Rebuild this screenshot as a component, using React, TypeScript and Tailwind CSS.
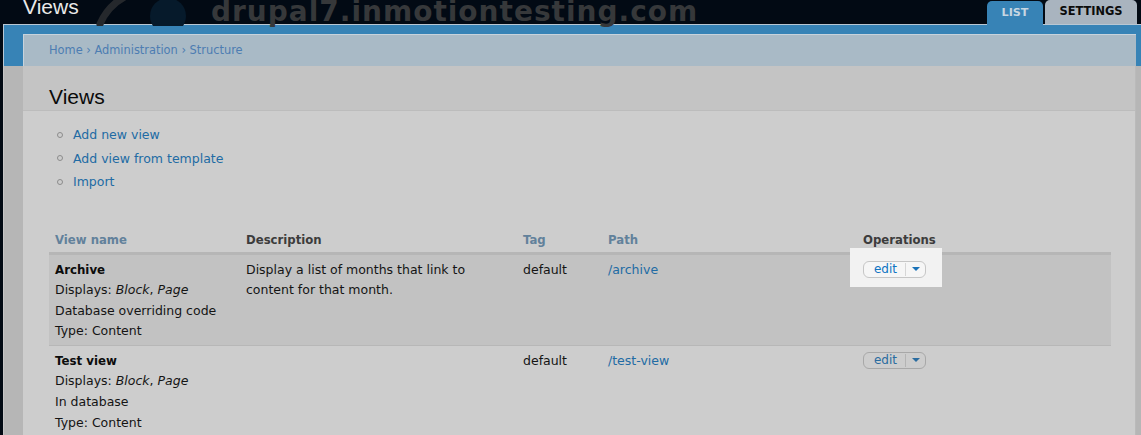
import React from 'react';

type Row = {
  name: string;
  storage: string;
  desc: string[];
  tag: string;
  path: string;
  lit?: boolean;
};

const rows: Row[] = [
  {
    name: 'Archive',
    storage: 'Database overriding code',
    desc: ['Display a list of months that link to', 'content for that month.'],
    tag: 'default',
    path: '/archive',
    lit: true,
  },
  {
    name: 'Test view',
    storage: 'In database',
    desc: [],
    tag: 'default',
    path: '/test-view',
  },
];

const cols = 'grid grid-cols-[191px_277px_85px_255px_254px]';

function EditButton({ lit }: { lit?: boolean }) {
  return (
    <div
      className={`relative z-10 flex h-[17px] w-[63px] items-center rounded-[6px] border ${
        lit ? 'border-[#c6c6c6] bg-[#f6f6f6]' : 'border-[#a8a8a8] bg-[#cdcdcd]'
      }`}
    >
      <span className={`flex-1 pl-[2px] text-center text-[12px] leading-none ${lit ? 'text-[#0f74c2]' : 'text-[#2a6ca0]'}`}>
        edit
      </span>
      <span className={`h-[13px] w-px ${lit ? 'bg-[#d6d6d6]' : 'bg-[#b4b4b4]'}`} />
      <span className="flex w-[19px] justify-center">
        <span className={`border-x-[4px] border-t-[4px] border-x-transparent ${lit ? 'border-t-[#1a72b8]' : 'border-t-[#2a6ca0]'}`} />
      </span>
    </div>
  );
}

export default function App() {
  return (
    <div className="relative h-[435px] w-[1141px] overflow-hidden bg-[#020a14] font-['DejaVu_Sans',Verdana,sans-serif]">
      {/* top bar */}
      <div className="relative flex h-[24px] items-start justify-between">
        <svg className="absolute left-[92px] top-[-14px]" width="100" height="40" viewBox="0 0 100 40">
          <path d="M8 38 C 14 24, 26 12, 44 6" stroke="#25282c" strokeWidth="7" fill="none" strokeLinecap="round" />
          <circle cx="76" cy="30" r="18" fill="#061a2b" />
        </svg>
        <div className="absolute left-[211px] top-[-3px] whitespace-nowrap text-[28px] font-bold leading-[30px] tracking-[1px] text-[#36383a]">
          drupal7.inmotiontesting.com
        </div>
        <div className="relative -mt-[3px] pl-[23px] font-['Liberation_Sans',Arial,sans-serif] text-[21px] leading-[20px] text-[#e9e9e9]">
          Views
        </div>
        <div className="relative z-10 flex gap-[2px] pr-[4px]">
          <div className="relative top-[1px] flex h-[24px] w-[56px] items-center justify-center rounded-t-[5px] bg-[#3783b6] text-[11.2px] font-bold text-[#c6d6e2]">
            LIST
          </div>
          <div className="flex h-[24px] w-[92px] items-center justify-center rounded-t-[5px] bg-[#a9b4bf] text-[11.4px] font-bold text-[#0c0c0c]">
            SETTINGS
          </div>
        </div>
      </div>

      {/* blue band + breadcrumb */}
      <div className="ml-[3px] border-l border-t border-[#b9c7d3] bg-[#3783b6] pl-[19px] pr-[5px] pt-[9px]">
        <div className="flex h-[32px] items-center border-l border-t border-[#c7d3dc] bg-[#a9bac6] pl-[25px] pt-[1px] text-[11.4px] text-[#4d7db2]">
          Home › Administration › Structure
        </div>
      </div>

      {/* page body */}
      <div className="ml-[3px] h-full border-l border-[#c6c6c6] bg-[#b6b6b6] pl-[19px] pr-[5px]">
        <div className="h-full border-r border-[#bababa] bg-[#cdcdcd]">
          <div className="h-[45px] border-b border-[#bcbcbc] bg-[#c4c4c4] pl-[26px] pt-[19px] font-['Liberation_Sans',Arial,sans-serif] text-[21px] leading-[24px] text-[#0a0a0a]">
            Views
          </div>

          <ul className="mt-[12px] pl-[34px] text-[12.5px] leading-[23.5px] text-[#216ba4]">
            {['Add new view', 'Add view from template', 'Import'].map((t) => (
              <li key={t} className="flex items-center">
                <span className="mr-[10px] h-[6px] w-[6px] rounded-full border border-[#8c8c8c]" />
                {t}
              </li>
            ))}
          </ul>

          <div className="ml-[26px] mt-[36px] w-[1062px]">
            <div className={`${cols} h-[25px] items-center border-b-[3px] border-[#b6b6b6] text-[11.7px] font-bold`}>
              <div className="pl-[6px] text-[#62819b]">View name</div>
              <div className="pl-[6px] text-[#3c3c3c]">Description</div>
              <div className="pl-[6px] text-[#62819b]">Tag</div>
              <div className="pl-[6px] text-[#62819b]">Path</div>
              <div className="pl-[6px] text-[#3c3c3c]">Operations</div>
            </div>

            {rows.map((r) => (
              <div
                key={r.name}
                className={`${cols} border-b border-[#b7b7b7] pb-[3px] pt-[5px] text-[12.5px] leading-[20.6px] text-[#141414] ${
                  r.lit ? 'bg-[#c2c2c2]' : 'bg-[#cdcdcd]'
                }`}
              >
                <div className="pl-[6px]">
                  <div className="text-[11.8px] font-bold text-[#0c0c0c]">{r.name}</div>
                  <div>
                    Displays: <i>Block</i>, <i>Page</i>
                  </div>
                  <div>{r.storage}</div>
                  <div>Type: Content</div>
                </div>
                <div className="whitespace-nowrap pl-[6px]">
                  {r.desc.map((d) => (
                    <div key={d}>{d}</div>
                  ))}
                </div>
                <div className="pl-[6px]">{r.tag}</div>
                <div className="pl-[6px] text-[#216ba4]">{r.path}</div>
                <div className="pl-[6px] pt-[1px]">
                  <div className="relative w-[63px]">
                    {r.lit && <div className="absolute -left-[13px] -top-[13px] h-[39px] w-[92px] bg-[#f2f2f2]" />}
                    <EditButton lit={r.lit} />
                  </div>
                </div>
              </div>
            ))}
          </div>
        </div>
      </div>
    </div>
  );
}
